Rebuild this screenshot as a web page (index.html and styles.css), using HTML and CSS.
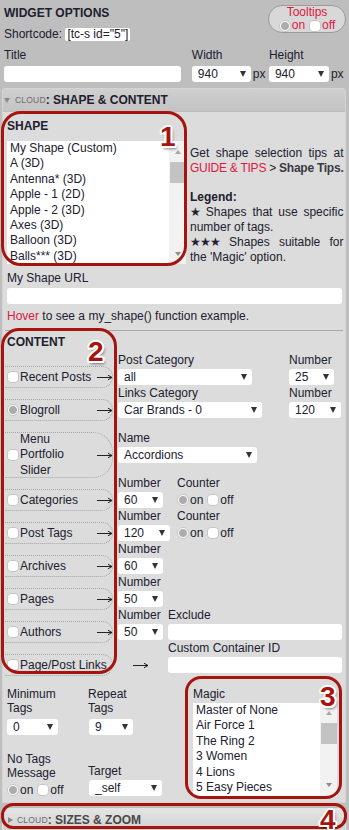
FILE: index.html
```html
<!doctype html>
<html>
 <head>
  <meta charset="UTF-8">
  <title>Widget Options</title>
  <link rel="stylesheet" href="styles.css">
 </head>
 <body>
  <!-- top options -->
  <div class="top">
   <div class="head">
    <div>
     <div class="title">WIDGET OPTIONS</div>
     <div class="short">Shortcode: <span class="code">[tc-s id="5"]</span></div>
    </div>
    <div class="tips">
     <div>Tooltips</div>
     <div class="choice"><span class="rd on"></span>on<span class="rd off"></span>off</div>
    </div>
   </div>
   <div class="sizes">
    <div class="f-title">
     <div class="lbl">Title</div>
     <div class="inp"></div>
    </div>
    <div class="f-dim">
     <div class="lbl">Width</div>
     <div class="ctl"><span class="sel w59">940<i class="dd"></i></span><span class="px">px</span></div>
    </div>
    <div class="f-dim">
     <div class="lbl">Height</div>
     <div class="ctl"><span class="sel w60">940<i class="dd"></i></span><span class="px">px</span></div>
    </div>
   </div>
  </div>

  <!-- shape & content -->
  <div class="panel">
   <div class="phead"><i class="tri-d"></i><span class="cl">CLOUD</span><b>: SHAPE &amp; CONTENT</b></div>
   <div class="pbody">
    <div class="shape">
     <div class="shape-l">
      <div class="h">SHAPE</div>
      <div class="lb lb-shape">
       <div class="items">
        <div>My Shape (Custom)</div>
        <div>A (3D)</div>
        <div>Antenna* (3D)</div>
        <div>Apple - 1 (2D)</div>
        <div>Apple - 2 (3D)</div>
        <div>Axes (3D)</div>
        <div>Balloon (3D)</div>
        <div>Balls*** (3D)</div>
       </div>
       <div class="sb"><i class="up"></i><i class="thumb"></i><i class="down"></i></div>
      </div>
     </div>
     <div class="shape-r">
      <p>Get shape selection tips at <span class="nw"><span class="red">GUIDE &amp; TIPS</span> &gt; <b>Shape Tips.</b></span></p>
      <p class="legend">Legend:</p>
      <p><span class="star">★</span> Shapes that use specific number of tags.</p>
      <p><span class="star">★★★</span> Shapes suitable for the 'Magic' option.</p>
     </div>
    </div>
    <div class="lbl url">My Shape URL</div>
    <div class="inp url-inp"></div>
    <div class="hover"><span class="red">Hover</span> to see a my_shape() function example.</div>
    <hr class="sep">
    <div class="h">CONTENT</div>

    <div class="rows">
     <div class="row">
      <div class="src"><span class="rd"></span>Recent Posts</div>
      <svg class="arr" width="16" height="8" viewBox="0 0 16 8"><path d="M0 4.5H15M11 2.2l4 2.3-4 2.3" fill="none" stroke="#222"/></svg>
      <div class="flds">
       <div class="fld w171"><div class="fl">Post Category</div><span class="sel w134">all<i class="dd"></i></span></div>
       <div class="fld"><div class="fl">Number</div><span class="sel w45">25<i class="dd"></i></span></div>
      </div>
     </div>
     <div class="row">
      <div class="src"><span class="rd on"></span>Blogroll</div>
      <svg class="arr" width="16" height="8" viewBox="0 0 16 8"><path d="M0 4.5H15M11 2.2l4 2.3-4 2.3" fill="none" stroke="#222"/></svg>
      <div class="flds">
       <div class="fld w171"><div class="fl">Links Category</div><span class="sel w144">Car Brands - 0<i class="dd"></i></span></div>
       <div class="fld"><div class="fl">Number</div><span class="sel w52">120<i class="dd"></i></span></div>
      </div>
     </div>
     <div class="row">
      <div class="src tall"><span class="rd"></span><span>Menu<br>Portfolio<br>Slider</span></div>
      <svg class="arr" width="16" height="8" viewBox="0 0 16 8"><path d="M0 4.5H15M11 2.2l4 2.3-4 2.3" fill="none" stroke="#222"/></svg>
      <div class="flds">
       <div class="fld"><div class="fl">Name</div><span class="sel w139">Accordions<i class="dd"></i></span></div>
      </div>
     </div>
     <div class="row">
      <div class="src"><span class="rd"></span>Categories</div>
      <svg class="arr" width="16" height="8" viewBox="0 0 16 8"><path d="M0 4.5H15M11 2.2l4 2.3-4 2.3" fill="none" stroke="#222"/></svg>
      <div class="flds">
       <div class="fld w59"><div class="fl">Number</div><span class="sel w45">60<i class="dd"></i></span></div>
       <div class="fld"><div class="fl">Counter</div><div class="choice"><span class="rd on"></span>on<span class="rd off"></span>off</div></div>
      </div>
     </div>
     <div class="row">
      <div class="src"><span class="rd"></span>Post Tags</div>
      <svg class="arr" width="16" height="8" viewBox="0 0 16 8"><path d="M0 4.5H15M11 2.2l4 2.3-4 2.3" fill="none" stroke="#222"/></svg>
      <div class="flds">
       <div class="fld w59"><div class="fl">Number</div><span class="sel w52">120<i class="dd"></i></span></div>
       <div class="fld"><div class="fl">Counter</div><div class="choice"><span class="rd on"></span>on<span class="rd off"></span>off</div></div>
      </div>
     </div>
     <div class="row">
      <div class="src"><span class="rd"></span>Archives</div>
      <svg class="arr" width="16" height="8" viewBox="0 0 16 8"><path d="M0 4.5H15M11 2.2l4 2.3-4 2.3" fill="none" stroke="#222"/></svg>
      <div class="flds">
       <div class="fld"><div class="fl">Number</div><span class="sel w45">60<i class="dd"></i></span></div>
      </div>
     </div>
     <div class="row">
      <div class="src"><span class="rd"></span>Pages</div>
      <svg class="arr" width="16" height="8" viewBox="0 0 16 8"><path d="M0 4.5H15M11 2.2l4 2.3-4 2.3" fill="none" stroke="#222"/></svg>
      <div class="flds">
       <div class="fld"><div class="fl">Number</div><span class="sel w45">50<i class="dd"></i></span></div>
      </div>
     </div>
     <div class="row">
      <div class="src"><span class="rd"></span>Authors</div>
      <svg class="arr" width="16" height="8" viewBox="0 0 16 8"><path d="M0 4.5H15M11 2.2l4 2.3-4 2.3" fill="none" stroke="#222"/></svg>
      <div class="flds">
       <div class="fld w50"><div class="fl">Number</div><span class="sel w45">50<i class="dd"></i></span></div>
       <div class="fld grow"><div class="fl">Exclude</div><div class="inp"></div></div>
      </div>
     </div>
     <div class="row">
      <div class="src"><span class="rd"></span>Page/Post Links</div>
      <svg class="arr far" width="16" height="8" viewBox="0 0 16 8"><path d="M0 4.5H15M11 2.2l4 2.3-4 2.3" fill="none" stroke="#222"/></svg>
      <div class="flds far">
       <div class="fld grow"><div class="fl">Custom Container ID</div><div class="inp"></div></div>
      </div>
     </div>
    </div>

    <div class="bottom">
     <div class="col c1">
      <div class="fl2">Minimum<br>Tags</div>
      <span class="sel w51">0<i class="dd"></i></span>
      <div class="fl2 g">No Tags<br>Message</div>
      <div class="choice"><span class="rd on"></span>on<span class="rd off"></span>off</div>
     </div>
     <div class="col c2">
      <div class="fl2">Repeat<br>Tags</div>
      <span class="sel w44">9<i class="dd"></i></span>
      <div class="fl2 g">Target</div>
      <span class="sel w73">_self<i class="dd"></i></span>
     </div>
     <div class="col c3">
      <div class="fl2">Magic</div>
      <div class="lb lb-magic">
       <div class="items">
        <div>Master of None</div>
        <div>Air Force 1</div>
        <div>The Ring 2</div>
        <div>3 Women</div>
        <div>4 Lions</div>
        <div>5 Easy Pieces</div>
       </div>
       <div class="sb"><i class="up"></i><i class="thumb"></i><i class="down"></i></div>
      </div>
     </div>
    </div>
   </div>
  </div>

  <!-- sizes & zoom -->
  <div class="panel closed">
   <div class="phead"><i class="tri-r"></i><span class="cl">CLOUD</span><b>: SIZES &amp; ZOOM</b></div>
  </div>

  <!-- annotations -->
  <div class="mark m1"></div>
  <div class="mark m2"></div>
  <div class="mark m3"></div>
  <div class="mark m4"></div>
  <div class="num n1">1</div>
  <div class="num n2">2</div>
  <div class="num n3">3</div>
  <div class="num n4">4</div>
 </body>
</html>
```

FILE: styles.css
```css
*{
	margin:0;
	padding:0;
	box-sizing:border-box;
}
body{
	position:relative;
	width:349px;
	height:830px;
	overflow:hidden;
	background:#bebebe;
	color:#20202e;
	font:12px/14px "Liberation Sans",Arial,sans-serif;
}
.red{
	color:#e0173f;
}

/* top options */
.top{
	padding:5px 3px 0 4px;
}
.head{
	display:flex;
	justify-content:space-between;
	align-items:flex-start;
}
.title{
	font-weight:bold;
	line-height:16px;
}
.short{
	margin-top:5px;
	line-height:16px;
}
.code{
	display:inline-block;
	padding:0 2px;
	line-height:13px;
	background:#fff;
	border-radius:2px;
}
.tips{
	width:78px;
	height:28px;
	border:1px solid #9a9a9a;
	border-radius:14px;
	background:#d8d8d8;
	color:#e0173f;
	line-height:13px;
	text-align:center;
}
.choice{
	display:flex;
	align-items:center;
	height:16px;
}
.tips .choice{
	justify-content:center;
	height:13px;
}
.rd{
	flex-shrink:0;
	width:12px;
	height:12px;
	margin-right:1px;
	background:#fff;
	border:1px solid #c6c6c6;
	border-radius:4px;
}
.rd.on{
	border-radius:50%;
	background:radial-gradient(circle,#acacac 3.5px,#fff 4.5px);
}
.rd.off{
	margin-left:4px;
}
.sizes{
	display:flex;
	margin-top:6px;
}
.f-title{
	width:179px;
	margin-right:11px;
}
.f-dim{
	width:78px;
}
.lbl{
	line-height:14px;
}
.inp{
	height:16px;
	background:#fff;
	border-radius:3px;
}
.sizes .inp,.sizes .ctl{
	margin-top:4px;
}
.ctl{
	display:flex;
	align-items:center;
}
.px{
	margin-left:2px;
}
.sel{
	display:flex;
	align-items:center;
	justify-content:space-between;
	flex-shrink:0;
	height:16px;
	padding:0 5px 0 6px;
	background:#fff;
	border-radius:3px;
}
.dd{
	width:0;
	height:0;
	border-left:3.5px solid transparent;
	border-right:3.5px solid transparent;
	border-top:6px solid #333;
}
.w44{width:44px;}
.w45{width:45px;}
.w51{width:51px;}
.w52{width:52px;}
.w59{width:59px;}
.w60{width:60px;}
.w73{width:73px;}
.w134{width:134px;}
.w139{width:139px;}
.w144{width:144px;}
.w50{width:50px;}
.w171{width:171px;}

/* panels */
.panel{
	margin:6px 3px 0 2px;
	border:1px solid #d4d4d4;
	border-radius:3px 3px 0 0;
	background:#dcdcdc;
}
.phead{
	display:flex;
	align-items:center;
	height:23px;
	padding-left:1px;
	background:linear-gradient(#cfcfcf,#c3c3c3);
	border-bottom:1px solid #bcbcbc;
}
.tri-d{
	width:0;
	height:0;
	margin-right:5px;
	border-left:3.5px solid transparent;
	border-right:3.5px solid transparent;
	border-top:5px solid #8a8a8a;
}
.tri-r{
	width:0;
	height:0;
	margin:0 4px 0 3px;
	border-top:3.5px solid transparent;
	border-bottom:3.5px solid transparent;
	border-left:5px solid #8a8a8a;
}
.cl{
	font-size:8.5px;
	color:#6c6c6c;
	letter-spacing:0.2px;
}
.phead b{
	white-space:pre;
}
.pbody{
	padding:7px 3px 4px 4px;
}
.h{
	font-weight:bold;
	line-height:14px;
}
.shape{
	display:flex;
}
.shape-l{
	width:179px;
	flex-shrink:0;
}
.lb{
	display:flex;
	margin-top:8px;
	background:#fff;
}
.lb-shape{
	height:123px;
}
.items{
	flex:1;
	padding-left:3px;
	line-height:15.4px;
	overflow:hidden;
	white-space:nowrap;
}
.sb{
	display:flex;
	flex-direction:column;
	align-items:center;
	width:17px;
	background:#f2f2f2;
}
.up{
	margin-top:9px;
	width:0;
	height:0;
	border-left:3.5px solid transparent;
	border-right:3.5px solid transparent;
	border-bottom:4px solid #a8a8a8;
}
.thumb{
	width:16px;
	height:21px;
	margin-top:8px;
	background:#c3c3c3;
}
.down{
	margin-top:auto;
	margin-bottom:8px;
	width:0;
	height:0;
	border-left:3.5px solid transparent;
	border-right:3.5px solid transparent;
	border-top:4px solid #8c8c8c;
}
.shape-r{
	flex:1;
	margin-left:4px;
	padding-top:27px;
	line-height:15px;
	text-align:justify;
}
.nw{
	white-space:nowrap;
	letter-spacing:-0.25px;
}
.shape-r b{
	color:#3a3a44;
}
.legend{
	margin-top:14px;
	font-weight:bold;
}
.star{
	display:inline-block;
	font-family:"DejaVu Sans",sans-serif;
	font-size:12px;
	line-height:14px;
	letter-spacing:-0.8px;
	vertical-align:top;
}
.url{
	margin-top:6px;
}
.url-inp{
	margin-top:3px;
}
.hover{
	margin-top:5px;
}
.sep{
	height:0;
	margin:7px -1px 4px -2px;
	border:0;
	border-top:1px solid #a9a9a9;
}

/* content rows */
.rows{
	margin:17px 0 0 -2px;
}
.row{
	display:flex;
	align-items:center;
	margin-bottom:11px;
}
.src{
	display:flex;
	align-items:center;
	flex-shrink:0;
	width:108px;
	height:22px;
	padding-left:2px;
	border:1px dotted #a4a4a4;
	border-left:0;
	border-radius:0 11px 11px 0;
	white-space:nowrap;
}
.src.tall{
	height:46px;
	border-radius:0 20px 20px 0;
	line-height:15.5px;
}
.arr{
	flex-shrink:0;
	margin-left:-16px;
}
.arr.far{
	margin-left:20px;
}
.flds{
	display:flex;
	flex:1;
	margin-left:5px;
}
.flds.far{
	margin-left:19px;
}
.fld{
	display:flex;
	flex-direction:column;
	align-items:flex-start;
	flex-shrink:0;
	margin:-12px 0;
	padding-bottom:15px;
}
.fl{
	margin-bottom:2px;
	line-height:13px;
	white-space:nowrap;
}
.fld .inp{
	align-self:stretch;
}
.grow{
	flex:1;
}

/* bottom options */
.bottom{
	display:flex;
}
.col{
	display:flex;
	flex-direction:column;
	align-items:flex-start;
}
.c1{width:81px;}
.c2{width:105px;}
.c3{width:144px;}
.fl2{
	line-height:14px;
}
.c1 .sel,.c2 .sel{
	margin-top:4px;
}
.c2 .sel{
	margin-left:1px;
}
.c1 .g{
	margin-top:17px;
}
.c1 .choice{
	margin-top:2px;
}
.c2 .g{
	margin-top:29px;
}
.c2 .g + .sel{
	margin-top:2px;
}
.lb-magic{
	align-self:stretch;
	height:94px;
	margin-top:2px;
}
.lb-magic .up{
	margin-top:8px;
}
.lb-magic .thumb{
	margin-top:8px;
}
.lb-magic .down{
	margin-bottom:10px;
}

.closed{
	margin-top:5px;
	border-color:#e2e2e2;
}
.closed .phead{
	height:21px;
	padding-left:2px;
	background:linear-gradient(#e4e4e4,#d2d2d2);
	border-bottom:0;
	color:#484848;
}

/* annotations */
.mark{
	position:absolute;
	border:3px solid #a5140e;
}
.m1{left:1px;top:111px;width:186px;height:155px;border-radius:20px;}
.m2{left:1px;top:328px;width:116px;height:346px;border-radius:18px;}
.m3{left:185px;top:676px;width:157px;height:123px;border-radius:16px;}
.m4{left:1px;top:803px;width:346px;height:26px;border-radius:12px;}
.num{
	position:absolute;
	font:bold 28px/28px "Liberation Sans",Arial,sans-serif;
	color:#a5140e;
	text-shadow:-2px 0 0 #fff,2px 0 0 #fff,0 -2px 0 #fff,0 2px 0 #fff,-1.5px -1.5px 0 #fff,1.5px -1.5px 0 #fff,-1.5px 1.5px 0 #fff,1.5px 1.5px 0 #fff,2px 3px 3px rgba(0,0,0,.5);
}
.n1{left:160px;top:123px;}
.n2{left:88px;top:338px;}
.n3{left:320px;top:683px;}
.n4{left:320px;top:806px;}
```
